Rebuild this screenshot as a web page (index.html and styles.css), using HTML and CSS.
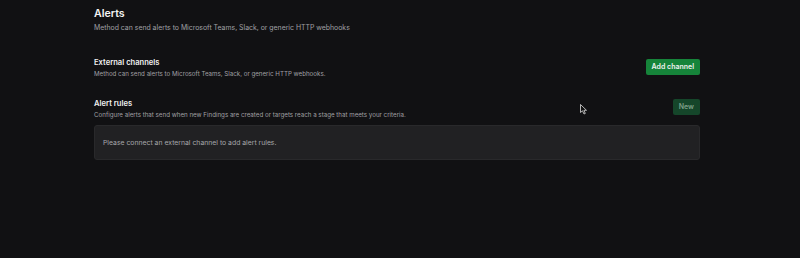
FILE: index.html
```html
<!DOCTYPE html>
<html>
<head>
<meta charset="utf-8">
<link rel="stylesheet" href="styles.css">
</head>
<body>
<main class="page">
  <header class="page-head">
    <h1 class="title">Alerts</h1>
    <p class="subtitle">Method can send alerts to Microsoft Teams, Slack, or generic HTTP webhooks</p>
  </header>
  <section class="section">
    <div class="section-text">
      <h2 class="section-title">External channels</h2>
      <p class="section-desc">Method can send alerts to Microsoft Teams, Slack, or generic HTTP webhooks.</p>
    </div>
    <button class="btn btn-primary">Add channel</button>
  </section>
  <section class="section section-rules">
    <div class="section-text">
      <h2 class="section-title">Alert rules</h2>
      <p class="section-desc">Configure alerts that send when new Findings are created or targets reach a stage that meets your criteria.</p>
    </div>
    <button class="btn btn-disabled">New</button>
  </section>
  <div class="empty">Please connect an external channel to add alert rules.</div>
</main>
<svg class="cursor" width="8" height="11" viewBox="0 0 8 11"><path d="M0.5 0.5 L0.5 8.5 L2.5 6.8 L4 10 L5.3 9.4 L3.9 6.3 L6.5 6.3 Z" fill="#111" stroke="#ddd" stroke-width="0.8" stroke-linejoin="round"/></svg>
</body>
</html>
```
FILE: styles.css
```css
html, body {
  margin: 0;
  padding: 0;
  background: #111113;
  height: 100%;
}
body {
  font-family: Inter, "Noto Sans", sans-serif;
  color: #ededed;
  position: relative;
}
.page {
  width: 606px;
  margin-left: 94px;
  padding-top: 7px;
}
.page-head {
  margin-bottom: 23px;
}
.title {
  margin: 0;
  font-size: 10.6px;
  line-height: 14px;
  font-weight: 600;
  color: #f4f4f4;
}
.subtitle {
  margin: 1px 0 0;
  font-size: 6.9px;
  line-height: 12px;
  color: #a0a0a4;
}
.section {
  display: flex;
  align-items: flex-start;
  justify-content: space-between;
}
.section-rules {
  margin-top: 19px;
}
.section-title {
  margin: 0;
  font-size: 7.6px;
  line-height: 11px;
  font-weight: 600;
  color: #f0f0f0;
}
.section-desc {
  margin: 1px 0 0;
  font-size: 6.2px;
  line-height: 10px;
  color: #a0a0a4;
}
.btn {
  border: none;
  border-radius: 2px;
  height: 16px;
  padding: 0 6px;
  font-family: inherit;
  font-size: 7px;
  font-weight: 600;
  line-height: 16px;
}
.btn-primary {
  background: #16843a;
  color: #f2f2f2;
  margin-top: 2px;
}
.btn-disabled {
  background: #15462a;
  color: #7d9e88;
  margin-top: 1px;
}
.empty {
  margin-top: 5px;
  height: 35px;
  box-sizing: border-box;
  display: flex;
  align-items: center;
  padding: 0 8px;
  background: #212123;
  border: 1px solid #29292b;
  border-radius: 3px;
  font-size: 6.85px;
  color: #a6a6aa;
}
.cursor {
  position: absolute;
  left: 580px;
  top: 104px;
}
```
